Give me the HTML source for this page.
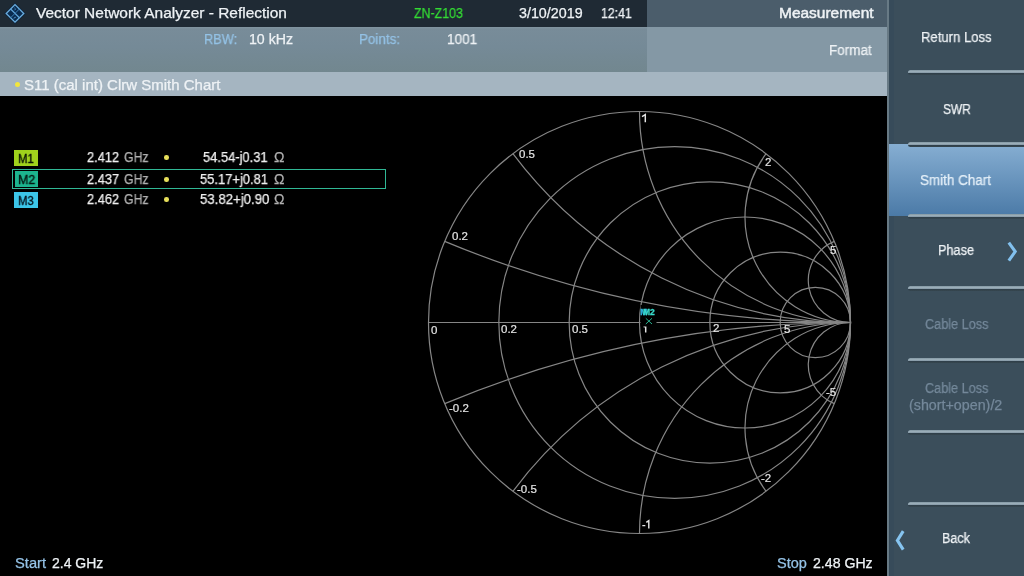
<!DOCTYPE html>
<html><head><meta charset="utf-8">
<style>
*{margin:0;padding:0;box-sizing:border-box}
html,body{width:1024px;height:576px;overflow:hidden;background:#000;font-family:"Liberation Sans",sans-serif}
.a{position:absolute;white-space:nowrap;line-height:1;will-change:transform;-webkit-text-stroke:0.25px currentColor}
.b{position:absolute}
.sep{position:absolute;left:908px;width:116px;height:5px;border-radius:2.5px 0 0 2.5px;background:linear-gradient(#8397a3 0,#9aadb8 1.5px,#8a9daa 2.6px,#2f3f4a 3.4px,#37474f 5px)}
svg{position:absolute;left:0;top:0}
</style></head><body>
<div class="b" style="left:0;top:0;width:647px;height:27px;background:#1f2a34"></div>
<div class="b" style="left:647px;top:0;width:241px;height:27px;background:#4b5d6b"></div>
<div class="b" style="left:0;top:27px;width:647px;height:45px;background:linear-gradient(#8395a1 0,#788c99 2px,#758a97 20px,#72878f 45px)"></div>
<div class="b" style="left:647px;top:27px;width:241px;height:45px;background:#8498a5"></div>
<div class="b" style="left:0;top:72px;width:888px;height:24px;background:#a5b5c1"></div>
<div class="b" style="left:887px;top:0;width:137px;height:576px;background:#3b4e5b"></div>
<div class="b" style="left:887px;top:0;width:2px;height:576px;background:#687a85"></div>
<div class="b" style="left:889px;top:0;width:4.5px;height:576px;background:#36495a;opacity:0.6"></div>
<div class="b" style="left:889px;top:144px;width:135px;height:72px;background:linear-gradient(#86aed2,#4b7aa7)"></div>
<div class="sep" style="top:69.5px"></div>
<div class="sep" style="top:141.5px"></div>
<div class="sep" style="top:213.5px"></div>
<div class="sep" style="top:285.5px"></div>
<div class="sep" style="top:357.5px"></div>
<div class="sep" style="top:429.5px"></div>
<div class="sep" style="top:501.5px"></div>
<svg width="30" height="27" viewBox="0 0 30 27">
<g transform="translate(15 13.4) rotate(45)">
<rect x="-7.8" y="-7.8" width="15.6" height="15.6" fill="#15283c"/>
<rect x="-6.2" y="-6.2" width="12.4" height="12.4" fill="#0a2c50" stroke="#6aaee0" stroke-width="1.3"/>
<line x1="-6.2" y1="0" x2="6.2" y2="0" stroke="#5fa4da" stroke-width="1.2"/>
<line x1="0" y1="-6.2" x2="0" y2="6.2" stroke="#3f82bb" stroke-width="0.9"/>
<path d="M-4.5 -3.5 Q-2 -4.5 -2.5 -2" fill="none" stroke="#4d90c8" stroke-width="0.8"/>
<path d="M3.5 2 Q1.5 3 3 4.5" fill="none" stroke="#4d90c8" stroke-width="0.8"/>
</g>
</svg>
<div class="b" style="left:15px;top:82.1px;width:5px;height:5px;border-radius:50%;background:#f2e53c"></div>
<svg width="1024" height="576">
<g fill="none" stroke="#868686" stroke-width="1.2">
<circle cx="639.50" cy="322.50" r="211.00"/>
<circle cx="674.67" cy="322.50" r="175.83"/>
<circle cx="709.83" cy="322.50" r="140.67"/>
<circle cx="745.00" cy="322.50" r="105.50"/>
<circle cx="780.17" cy="322.50" r="70.33"/>
<circle cx="815.33" cy="322.50" r="35.17"/>
<line x1="428.50" y1="322.5" x2="850.50" y2="322.5"/>
<path d="M444.73 241.35 A1055.00 1055.00 0 0 0 850.50 322.50"/>
<path d="M444.73 403.65 A1055.00 1055.00 0 0 1 850.50 322.50"/>
<path d="M512.90 153.70 A422.00 422.00 0 0 0 850.50 322.50"/>
<path d="M512.90 491.30 A422.00 422.00 0 0 1 850.50 322.50"/>
<path d="M639.50 111.50 A211.00 211.00 0 0 0 850.50 322.50"/>
<path d="M639.50 533.50 A211.00 211.00 0 0 1 850.50 322.50"/>
<path d="M766.10 153.70 A105.50 105.50 0 0 0 850.50 322.50"/>
<path d="M766.10 491.30 A105.50 105.50 0 0 1 850.50 322.50"/>
<path d="M834.27 241.35 A42.20 42.20 0 0 0 850.50 322.50"/>
<path d="M834.27 403.65 A42.20 42.20 0 0 1 850.50 322.50"/>
</g>
<path d="M1008.8 242.6 L1015.2 251.6 L1008.8 260.6" fill="none" stroke="#82c0ee" stroke-width="3.1"/>
<path d="M903.2 531.2 L897.4 540.4 L903.2 549.6" fill="none" stroke="#86c4f0" stroke-width="3.1"/>
</svg>
<div class="a" style="left:519.00px;top:149.37px;font-size:11.50px;color:#e4e4e4;-webkit-text-stroke:0.2px currentColor;">0.5</div>
<div class="a" style="left:764.90px;top:156.77px;font-size:11.50px;color:#e4e4e4;-webkit-text-stroke:0.2px currentColor;">2</div>
<div class="a" style="left:451.70px;top:230.67px;font-size:11.50px;color:#e4e4e4;-webkit-text-stroke:0.2px currentColor;">0.2</div>
<div class="a" style="left:830.00px;top:245.07px;font-size:11.50px;color:#e4e4e4;-webkit-text-stroke:0.2px currentColor;">5</div>
<div class="a" style="left:430.90px;top:324.67px;font-size:11.50px;color:#e4e4e4;-webkit-text-stroke:0.2px currentColor;">0</div>
<div class="a" style="left:501.00px;top:323.67px;font-size:11.50px;color:#e4e4e4;-webkit-text-stroke:0.2px currentColor;">0.2</div>
<div class="a" style="left:571.60px;top:323.67px;font-size:11.50px;color:#e4e4e4;-webkit-text-stroke:0.2px currentColor;">0.5</div>
<div class="a" style="left:712.50px;top:323.47px;font-size:11.50px;color:#e4e4e4;-webkit-text-stroke:0.2px currentColor;">2</div>
<div class="a" style="left:783.60px;top:323.77px;font-size:11.50px;color:#e4e4e4;-webkit-text-stroke:0.2px currentColor;">5</div>
<div class="a" style="left:449.30px;top:402.67px;font-size:11.50px;color:#e4e4e4;-webkit-text-stroke:0.2px currentColor;">-0.2</div>
<div class="a" style="left:517.10px;top:483.57px;font-size:11.50px;color:#e4e4e4;-webkit-text-stroke:0.2px currentColor;">-0.5</div>
<div class="a" style="left:760.90px;top:472.97px;font-size:11.50px;color:#e4e4e4;-webkit-text-stroke:0.2px currentColor;">-2</div>
<div class="a" style="left:825.70px;top:387.47px;font-size:11.50px;color:#e4e4e4;-webkit-text-stroke:0.2px currentColor;">-5</div>
<svg width="1024" height="576">
<g fill="none" stroke="#e4e4e4" stroke-width="1.45">
<path d="M642 116.6 L645.3 114.6 L645.3 122.3"/>
<path d="M643.6 327.2 L645.7 325.9 L645.7 332.6"/>
<path d="M646.3 522.4 L648.8 520.6 L648.8 528.4 M642.3 525.6 L645.3 525.6"/>
</g>
<rect x="640.5" y="305" width="16" height="21.5" fill="#000"/>
<text x="640.3" y="314.6" font-family="Liberation Sans" font-size="8.5" font-weight="bold" fill="#2eb4e0" stroke="#2eb4e0" stroke-width="0.3">M</text>
<text x="643" y="314.6" font-family="Liberation Sans" font-size="8.5" font-weight="bold" fill="#38dccc" stroke="#38dccc" stroke-width="0.3">M2</text>
<path d="M645.8 318.3 L652 324 M652 318.3 L645.8 324" stroke="#28b090" stroke-width="1"/>
</svg>
<div class="b" style="left:14px;top:150px;width:24px;height:16px;background:#a0d21c"></div>
<div class="b" style="left:14.5px;top:171px;width:23.5px;height:16px;background:#1cb48e"></div>
<div class="b" style="left:14px;top:192px;width:24px;height:16px;background:#3cc5e8"></div>
<div class="b" style="left:12px;top:169px;width:374px;height:20px;border:1.7px solid #30b795"></div>
<div class="a" style="left:36.30px;top:6.25px;font-size:14.00px;color:#eef2f5;transform:scaleX(1.1043);transform-origin:0.00px 0;">Vector Network Analyzer - Reflection</div>
<div class="a" style="left:413.70px;top:6.25px;font-size:14.00px;color:#34dc34;transform:scaleX(0.8833);transform-origin:0.00px 0;">ZN-Z103</div>
<div class="a" style="left:518.90px;top:5.95px;font-size:14.00px;color:#eef2f5;transform:scaleX(1.0209);transform-origin:0.00px 0;">3/10/2019</div>
<div class="a" style="left:600.90px;top:5.95px;font-size:14.00px;color:#eef2f5;transform:scaleX(0.8787);transform-origin:0.00px 0;">12:41</div>
<div class="a" style="left:778.50px;top:6.15px;font-size:14.00px;color:#eef2f5;transform:scaleX(1.1051);transform-origin:0.00px 0;-webkit-text-stroke:0.45px currentColor;">Measurement</div>
<div class="a" style="left:204.40px;top:32.25px;font-size:14.00px;color:#94c2e6;transform:scaleX(0.9146);transform-origin:0.00px 0;">RBW:</div>
<div class="a" style="left:248.80px;top:32.25px;font-size:14.00px;color:#eef2f5;transform:scaleX(1.0103);transform-origin:0.00px 0;">10 kHz</div>
<div class="a" style="left:359.40px;top:32.25px;font-size:14.00px;color:#94c2e6;transform:scaleX(0.9579);transform-origin:0.00px 0;">Points:</div>
<div class="a" style="left:446.70px;top:32.25px;font-size:14.00px;color:#eef2f5;transform:scaleX(0.9727);transform-origin:0.00px 0;">1001</div>
<div class="a" style="left:829.20px;top:43.15px;font-size:14.00px;color:#eef2f5;transform:scaleX(0.9628);transform-origin:0.00px 0;">Format</div>
<div class="a" style="left:23.80px;top:78.05px;font-size:14.00px;color:#eef2f5;transform:scaleX(1.0712);transform-origin:0.00px 0;">S11 (cal int) Clrw Smith Chart</div>
<div class="a" style="left:920.60px;top:29.65px;font-size:14.00px;color:#eef2f5;transform:scaleX(0.9351);transform-origin:0.00px 0;">Return Loss</div>
<div class="a" style="left:942.50px;top:101.55px;font-size:14.00px;color:#eef2f5;transform:scaleX(0.8515);transform-origin:0.00px 0;">SWR</div>
<div class="a" style="left:920.00px;top:173.45px;font-size:14.00px;color:#e4eff8;transform:scaleX(0.9608);transform-origin:0.00px 0;">Smith Chart</div>
<div class="a" style="left:937.80px;top:243.35px;font-size:14.00px;color:#eef2f5;transform:scaleX(0.9068);transform-origin:0.00px 0;">Phase</div>
<div class="a" style="left:924.60px;top:317.35px;font-size:14.00px;color:#74889a;transform:scaleX(0.9065);transform-origin:0.00px 0;">Cable Loss</div>
<div class="a" style="left:924.60px;top:381.25px;font-size:14.00px;color:#74889a;transform:scaleX(0.9051);transform-origin:0.00px 0;">Cable Loss</div>
<div class="a" style="left:909.40px;top:397.55px;font-size:14.00px;color:#74889a;transform:scaleX(1.0202);transform-origin:0.00px 0;">(short+open)/2</div>
<div class="a" style="left:941.70px;top:531.15px;font-size:14.00px;color:#eef2f5;transform:scaleX(0.9021);transform-origin:0.00px 0;">Back</div>
<div class="a" style="left:14.80px;top:556.45px;font-size:14.00px;color:#94c2e6;transform:scaleX(1.0491);transform-origin:0.00px 0;">Start</div>
<div class="a" style="left:51.70px;top:556.45px;font-size:14.00px;color:#eef2f5;">2.4 GHz</div>
<div class="a" style="left:776.50px;top:556.45px;font-size:14.00px;color:#94c2e6;transform:scaleX(1.0347);transform-origin:0.00px 0;">Stop</div>
<div class="a" style="left:812.70px;top:556.45px;font-size:14.00px;color:#eef2f5;transform:scaleX(1.0093);transform-origin:0.00px 0;">2.48 GHz</div>
<div class="a" style="left:17.60px;top:151.80px;font-size:13.00px;color:#0c1606;transform:scaleX(0.8753);transform-origin:0.00px 0;-webkit-text-stroke:0.35px currentColor;">M1</div>
<div class="a" style="left:17.50px;top:172.70px;font-size:13.00px;color:#061812;transform:scaleX(0.9584);transform-origin:0.00px 0;-webkit-text-stroke:0.35px currentColor;">M2</div>
<div class="a" style="left:17.60px;top:194.30px;font-size:13.00px;color:#061620;transform:scaleX(0.8753);transform-origin:0.00px 0;-webkit-text-stroke:0.35px currentColor;">M3</div>
<div class="a" style="left:86.80px;top:150.05px;font-size:14.00px;color:#f0f0f0;transform:scaleX(0.9158);transform-origin:0.00px 0;">2.412</div>
<div class="a" style="left:124.00px;top:150.05px;font-size:14.00px;color:#b0b0b0;transform:scaleX(0.8750);transform-origin:0.00px 0;">GHz</div>
<div class="a" style="left:203.00px;top:150.05px;font-size:14.00px;color:#f0f0f0;transform:scaleX(0.9222);transform-origin:0.00px 0;">54.54-j0.31</div>
<div class="a" style="left:274.00px;top:150.05px;font-size:14.00px;color:#b0b0b0;">Ω</div>
<div class="a" style="left:164.0px;top:155.1px;width:4.6px;height:4.6px;border-radius:50%;background:#e6de5a"></div>
<div class="a" style="left:86.80px;top:171.55px;font-size:14.00px;color:#f0f0f0;transform:scaleX(0.9158);transform-origin:0.00px 0;">2.437</div>
<div class="a" style="left:124.00px;top:171.55px;font-size:14.00px;color:#b0b0b0;transform:scaleX(0.8750);transform-origin:0.00px 0;">GHz</div>
<div class="a" style="left:199.60px;top:171.55px;font-size:14.00px;color:#f0f0f0;transform:scaleX(0.9245);transform-origin:0.00px 0;">55.17+j0.81</div>
<div class="a" style="left:274.00px;top:171.55px;font-size:14.00px;color:#b0b0b0;">Ω</div>
<div class="a" style="left:164.0px;top:176.6px;width:4.6px;height:4.6px;border-radius:50%;background:#e6de5a"></div>
<div class="a" style="left:86.80px;top:192.05px;font-size:14.00px;color:#f0f0f0;transform:scaleX(0.9158);transform-origin:0.00px 0;">2.462</div>
<div class="a" style="left:124.00px;top:192.05px;font-size:14.00px;color:#b0b0b0;transform:scaleX(0.8750);transform-origin:0.00px 0;">GHz</div>
<div class="a" style="left:199.60px;top:192.05px;font-size:14.00px;color:#f0f0f0;transform:scaleX(0.9436);transform-origin:0.00px 0;">53.82+j0.90</div>
<div class="a" style="left:274.00px;top:192.05px;font-size:14.00px;color:#b0b0b0;">Ω</div>
<div class="a" style="left:164.0px;top:197.1px;width:4.6px;height:4.6px;border-radius:50%;background:#e6de5a"></div>
</body></html>
